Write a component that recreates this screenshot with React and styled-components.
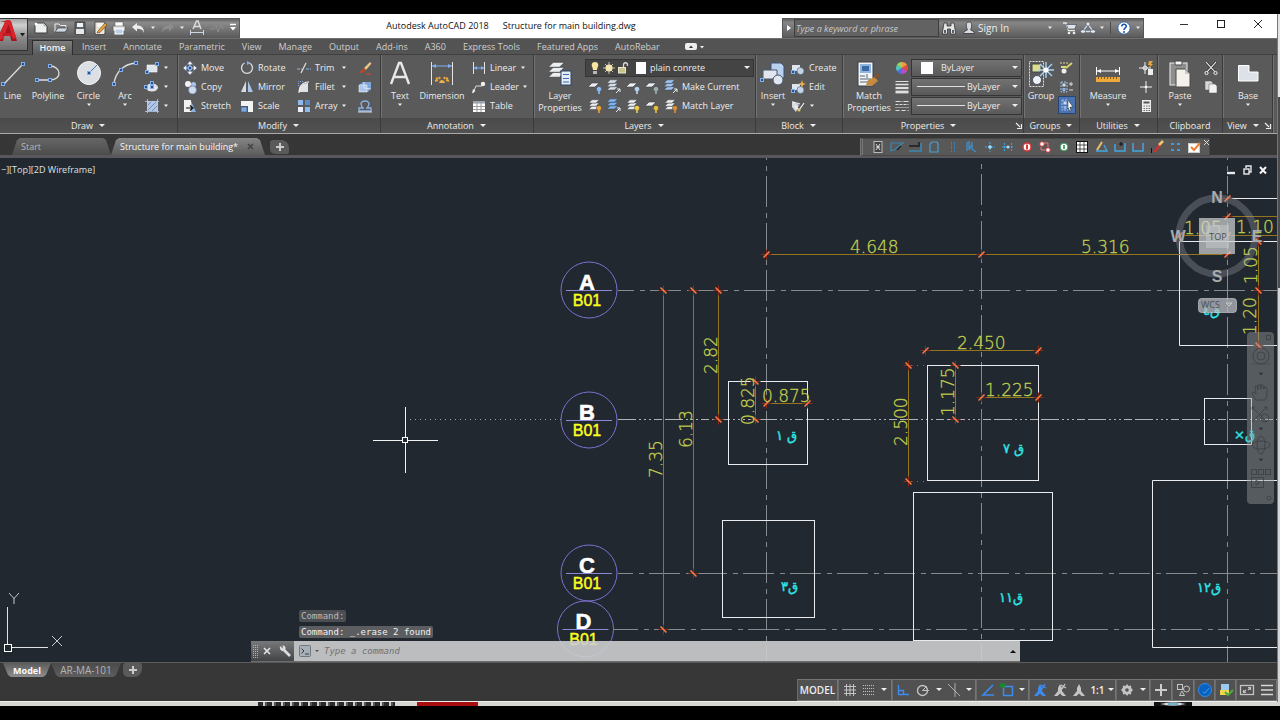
import React from "react";
import styled, { createGlobalStyle, css } from "styled-components";

const Global = createGlobalStyle`
  *, *::before, *::after { box-sizing: border-box; }
  html, body { margin: 0; background: #000; }
  body { font-family: "Open Sans", "Noto Sans", sans-serif; font-size: 9px; color: #ececec; }
  button, input, select { font: inherit; color: inherit; border: 0; margin: 0; padding: 0; background: none; }
  button { cursor: pointer; white-space: nowrap; }
  svg { display: block; flex: none; }
`;

/* ---------- shell ---------- */
const Page = styled.div`
  min-height: 100vh;
  padding: 14px 0;
  display: flex;
  flex-direction: column;
  background: #000;
  overflow: hidden;
`;
const Screen = styled.div`
  flex: 1;
  display: flex;
  min-width: 0;
`;
const Gutter = styled.div`
  flex: none;
  width: 3px;
  border-left: 1px solid #77787a;
  background: linear-gradient(#e4e4e4 83px, #4b4b4d 83px, #4b4b4d 274px, #d6d6d8 274px);
`;
const Window = styled.div`
  flex: 1;
  min-width: 0;
  display: flex;
  flex-direction: column;
  border-bottom: 1px solid #f0f0f0;
`;
const Taskbar = styled.div`
  height: 4px;
  display: flex;
  background: #d8d6d2;
  overflow: hidden;
`;
const TaskSlot = styled.div`
  width: ${(p) => p.$w}px;
  background: ${(p) => p.$bg || "transparent"};
`;

/* ---------- title bar ---------- */
const Header = styled.header`
  position: relative;
`;
const TitleBar = styled.div`
  height: 24px;
  display: flex;
  align-items: flex-end;
  background: #fff;
`;
const AppButton = styled.button`
  position: absolute;
  left: 0;
  top: 4px;
  width: 28px;
  height: 33px;
  background: linear-gradient(#a4a4a4, #cfcfcf 20%, #8b8b8b 60%, #6e6e6e);
  border: 1px solid #333;
  border-left: 0;
`;
const QuickAccess = styled.div`
  height: 20px;
  margin-left: 27px;
  padding-left: 4px;
  display: flex;
  background: linear-gradient(#606060, #8a8a8a 20%, #5c5c5c);
  border: 1px solid #5a5a5a;
  border-left: 0;
`;
const Cell = styled.button`
  width: ${(p) => p.$w || 20}px;
  flex: none;
  display: flex;
  align-items: center;
  justify-content: center;
`;
const Title = styled.div`
  flex: 1;
  height: 22px;
  align-self: flex-start;
  display: flex;
  align-items: center;
  justify-content: center;
  gap: 14px;
  color: #111;
`;
const InfoCenter = styled.div`
  height: 20px;
  display: flex;
  align-items: stretch;
  background: linear-gradient(#606060, #868686 20%, #5c5c5c);
  border: 1px solid #555;
`;
const Search = styled.input`
  width: 145px;
  padding: 0 1px;
  background: #626262;
  border: 1px solid #3e3e3e;
  font-style: italic;
  &::placeholder { color: #c8c8c8; opacity: 1; }
`;
const SignIn = styled.button`
  width: 83px;
  display: flex;
  align-items: center;
  justify-content: space-between;
  padding-right: 8px;
  font-size: 10px;
`;
const Divider = styled.span`
  width: 1px;
  margin: 3px 4px;
  background: #4a4a4a;
`;
const WindowButtons = styled.div`
  width: 133px;
  height: 20px;
  align-self: flex-start;
  padding-right: 1px;
  display: flex;
  justify-content: flex-end;
`;

/* ---------- ribbon ---------- */
const Tabs = styled.nav`
  height: 17px;
  padding-left: 32px;
  display: flex;
  background: #535353;
  border-top: 1px solid #707070;
  border-bottom: 1px solid #3f3f3f;
`;
const Tab = styled.button`
  padding: 0 8px 0 9px;
  line-height: 15px;
  color: ${(p) => (p.$on ? "#f4f4f4" : "#cfcfcf")};
  font-weight: ${(p) => (p.$on ? 600 : 400)};
  ${(p) =>
    p.$on &&
    css`
      width: 41px;
      padding: 0;
      margin: 1px 0 -1px 0;
      line-height: 14px;
      background: linear-gradient(#7e7e7e, #5a5a5a);
      border: 1px solid #2e2e2e;
      border-bottom: 0;
    `}
`;
const Ribbon = styled.div`
  height: 79px;
  display: flex;
  background: #5a5a5a;
  border-bottom: 1px solid #a9a9a9;
`;
const PanelBox = styled.section`
  width: ${(p) => p.$w}px;
  flex: none;
  display: flex;
  flex-direction: column;
  border-right: 1px solid #3b3b3b;
  box-shadow: 1px 0 #727272;
`;
const PanelBody = styled.div`
  flex: 1;
  padding: 3px 0 0 ${(p) => p.$pad || 0}px;
  display: flex;
`;
const PanelTitle = styled.button`
  height: 15px;
  display: flex;
  align-items: center;
  justify-content: center;
  background: linear-gradient(#4a4a4a, #525252);
`;
const TitleLabel = styled.span`
  display: flex;
  flex: 1;
  align-items: center;
  justify-content: center;
  gap: 5px;
`;
const Big = styled.button`
  width: ${(p) => p.$w}px;
  flex: none;
  display: flex;
  flex-direction: column;
  align-items: center;
  line-height: 12px;
`;
const BigArt = styled.span`
  height: 32px;
  display: flex;
  align-items: center;
`;
const BigCaret = styled.span`
  height: 6px;
  display: flex;
  align-items: center;
`;
const Col = styled.div`
  width: ${(p) => p.$w}px;
  flex: none;
  margin-left: ${(p) => p.$ml || 0}px;
`;
const Row = styled.div`
  height: 19px;
  display: flex;
  align-items: center;
`;
const LayerRow = styled(Row)`
  padding-left: 2px;
  gap: 3px;
`;
const Small = styled.button`
  height: 19px;
  width: ${(p) => (p.$fill ? "100%" : "auto")};
  display: flex;
  align-items: center;
  gap: 3px;
  ${(p) =>
    p.$on &&
    css`
      height: 18px;
      padding: 0 1px;
      background: #4a73b4;
      outline: 1px solid #27436f;
      outline-offset: -1px;
    `}
`;
const IconSlot = styled.span`
  width: 16px;
  height: 16px;
  flex: none;
  display: flex;
  align-items: center;
  justify-content: center;
`;
const SmallCaret = styled.span`
  margin-left: auto;
  padding-right: 3px;
`;
const Combo = styled.label`
  width: ${(p) => p.$w || 111}px;
  height: 18px;
  padding: 0 2px 0 3px;
  display: flex;
  align-items: center;
  background: ${(p) => (p.$dark ? "#444" : "linear-gradient(#727272, #595959)")};
  border: 1px solid #353535;
  select {
    appearance: none;
    flex: 1;
    min-width: 0;
    padding-left: ${(p) => p.$pad || 4}px;
    outline: none;
  }
`;
const LineSample = styled.span`
  width: 48px;
  flex: none;
  height: 1px;
  margin-left: 2px;
  background: #e0e0e0;
`;
const Swatch = styled.span`
  width: ${(p) => p.$s || 12}px;
  height: 12px;
  flex: none;
  background: #fff;
  margin-left: ${(p) => p.$ml || 0}px;
`;

/* ---------- file tabs ---------- */
const FileBar = styled.div`
  height: 24px;
  padding: 4px 0 0 12px;
  display: flex;
  align-items: flex-start;
  background: #363636;
  border-bottom: 3px solid #58585c;
`;
const FileTab = styled.button`
  width: ${(p) => p.$w}px;
  height: 17px;
  padding: 0 9px;
  display: flex;
  align-items: center;
  justify-content: space-between;
  color: ${(p) => (p.$on ? "#f8f8f8" : "#b8b8b8")};
  background: ${(p) => (p.$on ? "linear-gradient(#858585, #5c5c5c)" : "linear-gradient(#666, #4c4c4c)")};
  clip-path: polygon(0 100%, 5px 2px, 8px 0, calc(100% - 8px) 0, calc(100% - 5px) 2px, 100% 100%);
`;
const AddTab = styled.button`
  width: 19px;
  height: ${(p) => p.$h || 14}px;
  margin: ${(p) => p.$m || "2px 0 0 5px"};
  display: flex;
  align-items: center;
  justify-content: center;
  background: #5a5a5a;
  border-radius: ${(p) => p.$r || "3px 8px 2px 5px"};
`;
const Dock = styled.div`
  width: 350px;
  height: 18px;
  margin: 0 67px 0 auto;
  padding: 0 6px;
  display: flex;
  position: relative;
  background: #585858;
  border: 1px solid #484848;
  border-left: 3px double #777;
`;
const DockButton = styled.button`
  flex: 1;
  display: flex;
  align-items: center;
  justify-content: center;
`;
const DockClose = styled.button`
  position: absolute;
  right: 0;
  top: 1px;
`;

/* ---------- drawing area ---------- */
const Canvas = styled.main`
  position: relative;
  flex: 1;
  min-height: 504px;
  overflow: hidden;
  background: #212830;
`;
const Sheet = styled.svg`
  position: absolute;
  inset: 0;
  width: 100%;
  height: 100%;
  font-family: "DejaVu Sans", sans-serif;
`;
const ViewLabel = styled.div`
  position: absolute;
  left: 1px;
  top: 5px;
  line-height: 14px;
  color: #dfe1e3;
`;
const MdiButtons = styled.div`
  position: absolute;
  right: 6px;
  top: 6px;
  display: flex;
`;
const CubeWrap = styled.div`
  position: absolute;
  right: 8px;
  top: 28px;
`;
const NavBar = styled.div`
  position: absolute;
  right: 3px;
  top: 174px;
  width: 27px;
  height: 172px;
  background: rgba(150, 152, 156, 0.45);
  border-radius: 4px;
`;
const History = styled.div`
  position: absolute;
  left: 299px;
  bottom: 24px;
  display: flex;
  flex-direction: column;
  align-items: flex-start;
  gap: 4px;
  font: 9px/12px "DejaVu Sans Mono", monospace;
`;
const Echo = styled.span`
  padding: 0 2px;
  background: ${(p) => (p.$dim ? "#4b4f54" : "#5b5d61")};
  color: ${(p) => (p.$dim ? "#b9bbbd" : "#f2f2f2")};
  border-radius: 2px;
`;
const CommandLine = styled.div`
  position: absolute;
  left: 251px;
  right: 257px;
  bottom: 0;
  height: 21px;
  display: flex;
  border-bottom: 1px solid #6b6b6b;
`;
const CommandTools = styled.div`
  width: 43px;
  display: flex;
  background: linear-gradient(#77797b, #424446);
`;
const CommandInput = styled.label`
  flex: 1;
  display: flex;
  align-items: center;
  gap: 3px;
  padding: 0 3px 0 5px;
  background: rgba(205, 205, 207, 0.9);
  input {
    flex: 1;
    padding-left: 1px;
    font: italic 9px "DejaVu Sans Mono", monospace;
    outline: none;
  }
  input::placeholder { color: #707274; opacity: 1; }
`;

/* ---------- bottom ---------- */
const Bottom = styled.footer`
  height: 39px;
  display: flex;
  justify-content: space-between;
  align-items: flex-start;
  background: #373737;
  border-top: 1px solid #5c5c5c;
`;
const LayoutTabs = styled.div`
  padding-left: 3px;
  display: flex;
`;
const LayoutTab = styled.button`
  width: ${(p) => p.$w}px;
  height: 14px;
  background: ${(p) => (p.$on ? "linear-gradient(#5c5c5c, #8d8d8d)" : "linear-gradient(#4a4a4a, #5e5e5e)")};
  color: ${(p) => (p.$on ? "#fff" : "#b5b5b5")};
  font-weight: ${(p) => (p.$on ? 700 : 400)};
  font-size: ${(p) => (p.$on ? 9 : 10)}px;
  line-height: 13px;
  clip-path: polygon(0 0, 100% 0, calc(100% - 5px) calc(100% - 2px), calc(100% - 8px) 100%, 8px 100%, 5px calc(100% - 2px));
`;
const Status = styled.div`
  height: 22px;
  align-self: flex-end;
  display: flex;
`;
const StatusGroup = styled.div`
  width: ${(p) => p.$w}px;
  display: flex;
  align-items: center;
  justify-content: center;
  background: #515151;
  border: 1px solid #757575;
  border-left-color: #6a6a6a;
`;
const StatusText = styled(Cell)`
  width: auto;
  padding: 0 2px;
  font-size: 10px;
  font-weight: 600;
  color: #eee;
`;

/* ---------- drawings used as icons ---------- */
const Ic = ({ w = 16, h = 16, children }) => (
  <svg width={w} height={h} viewBox={`0 0 ${w} ${h}`} fill="none" stroke="none" aria-hidden="true">
    {children}
  </svg>
);
const Caret = ({ s = 4, c = "#eee" }) => (
  <Ic w={s * 2} h={s}>
    <path d={`M1 0H${s * 2 - 1}L${s} ${s - 1}Z`} fill={c} />
  </Ic>
);
const Tiny = () => (
  <Ic w={6} h={4}>
    <path d="M1 0.5H5L3 3Z" fill="#f0f0f0" />
  </Ic>
);
const B = "#7fb0f0";
const Node = ({ x, y }) => <rect x={x - 1.5} y={y - 1.5} width="3" height="3" fill="#2e4f86" stroke={B} />;

const NewI = () => (<Ic><path d="M2 3H11L14 6V13H2Z" fill="#eef0f0" stroke="#3c3c3c" /><path d="M10.500 3V6.500H14" fill="#b8b8b8" /><circle cx="3" cy="4" r="1.500" fill="#fff" /></Ic>);
const OpenI = () => (<Ic><path d="M2 12V4H6L7.500 5.500H13V8" fill="#7e7e7e" stroke="#f0f0f0" /><path d="M2 12L5 8H15L12 12Z" fill="#cfd8e4" stroke="#333" strokeWidth=".6" /></Ic>);
const SaveI = ({ pen }) => (<Ic><path d="M3 2H13V14H3Z" fill={pen ? "#e4e0d2" : "#5b6670"} stroke="#333" strokeWidth=".7" /><rect x="5" y="3" width="6" height="4" fill="#f4f4f4" /><rect x="4" y="9" width="8" height="5" fill="#e8e8e8" />{pen && <path d="M6 11L13 3L15 5L8 12.500L5 13Z" fill="#e8a43a" stroke="#5d3b10" strokeWidth=".6" />}</Ic>);
const PrintI = () => (<Ic><rect x="4" y="2" width="8" height="5" fill="#fff" stroke="#555" strokeWidth=".5" /><rect x="2" y="6" width="12" height="5" rx="1" fill="#e3e3e3" stroke="#444" strokeWidth=".5" /><rect x="4" y="9" width="8" height="5" fill="#b8cfe8" stroke="#fff" /></Ic>);
const Arrow = ({ flip, c }) => (<Ic><g transform={flip ? "translate(16 0) scale(-1 1)" : undefined}><path d="M2 7L7 3V5.500C12 5.500 14 8 14 13C12.500 9.500 11 8.800 7 8.800V11.500Z" fill={c} /></g></Ic>);
const DimA = () => (<Ic w={18} h={16}><path d="M5 9L8.500 1H10L13 9M6.500 6.500H11.500" stroke="#ddd" strokeWidth="1.400" /><path d="M2.500 10V15M15.500 10V15M2.500 12.500H15.500" stroke="#c9d6e8" /></Ic>);
const PulseI = () => (<Ic><path d="M1 9H5L7 5L9 12L12 4L13 8H15" stroke="#8b8b8b" /></Ic>);
const MoreI = () => (<Ic w={10} h={10}><path d="M2 1.500H8" stroke="#fff" strokeWidth="1.500" /><path d="M2 4H8L5 7.500Z" fill="#fff" /></Ic>);
const LogoA = () => (<Ic w={27} h={31}><path d="M0 2H11L17 22H11.500L9.800 16H4.500L3 22H0V14L5 3Z" fill="#a5141a" /><path d="M0 14L6 1H10L16.500 19L13 20L8.500 5.500L3 20L0 21Z" fill="#d8262c" /><path d="M3 14H11L12 17H2Z" fill="#c41d24" /><path d="M20 14H25L22.500 17.500Z" fill="#1c1c1c" /></Ic>);
const Binoc = () => (<Ic><path d="M3 3H6V6H10V3H13L14.500 12V14H9.500V9H6.500V14H1.500V12Z" fill="#e6e6e6" stroke="#333" strokeWidth=".8" /><rect x="3" y="10" width="2" height="3" fill="#4f5f74" /><rect x="11" y="10" width="2" height="3" fill="#4f5f74" /></Ic>);
const UserI = () => (<Ic><path d="M8 2C10.500 2 11 4 10.600 6.500C10.300 8.500 9.600 9 9.600 10C11 11 13.500 11 13.500 13.500H2.500C2.500 11 5 11 6.400 10C6.400 9 5.700 8.500 5.400 6.500C5 4 5.500 2 8 2Z" fill="#d8dadd" stroke="#30353c" strokeWidth=".8" /></Ic>);
const CartI = () => (<Ic><path d="M1 3H4L6.500 10.500H13" stroke="#e8e8e8" strokeWidth="1.300" /><path d="M4.500 4.500H14.500L12.800 9H6Z" fill="#dfe3ea" stroke="#39424f" strokeWidth=".6" /><circle cx="7" cy="13" r="1.300" fill="#eee" /><circle cx="12" cy="13" r="1.300" fill="#eee" /></Ic>);
const TriI = () => (<Ic><path d="M8 4L3 11.500H13Z" stroke="#cfdcf0" strokeWidth="1.300" /><circle cx="8" cy="4" r="2" fill="#e6ecf6" stroke="#456" strokeWidth=".6" /><ellipse cx="3" cy="11.500" rx="2.500" ry="1.800" fill="#e6ecf6" stroke="#456" strokeWidth=".6" /><ellipse cx="13" cy="11.500" rx="2.500" ry="1.800" fill="#e6ecf6" stroke="#456" strokeWidth=".6" /></Ic>);
const HelpI = () => (<Ic><circle cx="8" cy="8" r="6.200" fill="#fff" stroke="#2e5fa3" strokeWidth="1" /><path d="M5.800 6.500C5.800 3.500 10.400 3.600 10.300 6.300C10.200 8 8 8 8 10" stroke="#1d57a8" strokeWidth="1.600" /><circle cx="8" cy="12" r="1" fill="#1d57a8" /></Ic>);

/* draw panel */
const LineI = () => (<Ic w={26} h={28}><path d="M3 25L23 4" stroke="#ddd" strokeWidth="1.300" /><Node x={3} y={24} /><Node x={23} y={4} /></Ic>);
const PolyI = () => (<Ic w={28} h={28}><path d="M3 20H16C29 20 27 6 16 6" stroke="#ddd" strokeWidth="1.300" /><Node x={3} y={20} /><Node x={16} y={20} /><Node x={16} y={6} /></Ic>);
const CircleI = () => (<Ic w={28} h={28}><circle cx="14" cy="13" r="11.500" fill="#dcdfe4" stroke="#f4f4f4" /><path d="M14 13L22 5" stroke="#4d78b8" /><Node x={14} y={13} /></Ic>);
const ArcI = () => (<Ic w={28} h={28}><path d="M3 24C4 13 12 4 25 3" stroke="#ddd" strokeWidth="1.300" /><Node x={3} y={24} /><Node x={10} y={10} /><Node x={25} y={3} /></Ic>);
const RectI = () => (<Ic><path d="M3 5H13V12H3Z" fill="#dfe3ea" stroke="#fff" strokeWidth=".6" /><Node x={3} y={12} /><Node x={13} y={4} /></Ic>);
const EllI = () => (<Ic><ellipse cx="8" cy="8.500" rx="6" ry="4" fill="#e0e4ea" /><Node x={2} y={8} /><Node x={8} y={8} /><Node x={8} y={4} /></Ic>);
const HatchI = () => (<Ic><rect x="3" y="3" width="11" height="10" fill="#b4c6e2" /><path d="M3 8L8 3M3 13L13 3M8 13L14 7" stroke="#6a8fc6" /><path d="M3.500 1V15M13.500 1V15M1 3.500H15M1 13.500H15" stroke="#b8cce8" strokeWidth=".8" /></Ic>);
/* modify panel */
const MoveI = () => (<Ic><path d="M8 1L11 4.500H5ZM8 15L11 11.500H5ZM1 8L4.500 5V11ZM15 8L11.500 5V11Z" fill="#f0f3f8" stroke="#43618e" strokeWidth=".4" /><path d="M8 4V12M4 8H12" stroke="#b9cdea" strokeWidth="1.200" /><Node x={8} y={8} /></Ic>);
const CopyI = () => (<Ic><circle cx="6" cy="5" r="3" fill="#f2f2f2" /><circle cx="11.500" cy="5.500" r="2.500" fill="#a9c3e8" /><circle cx="10.500" cy="11" r="4" fill="#cfdcee" stroke="#56719a" strokeWidth=".6" /></Ic>);
const StretchI = () => (<Ic><path d="M2 2H9V14H2Z" fill="#f1f3f5" /><path d="M9 3L14 14H9Z" fill="#86b2e4" /><path d="M4 10H10M8 7.500L11 10L8 12.500" stroke="#111" strokeWidth="1.200" /></Ic>);
const RotateI = () => (<Ic><path d="M10.500 3A5.500 5.500 0 1 1 5.500 3" stroke="#d5d9de" strokeWidth="1.400" /><path d="M8 1L11.500 3L8 5Z" fill={B} /></Ic>);
const MirrorI = () => (<Ic><path d="M7 2V13H2Z" fill="#d8dce2" /><path d="M9 2V13H14Z" fill="#a9c3e6" /></Ic>);
const ScaleI = () => (<Ic><path d="M2 3H14V14H9V8H2Z" fill="#f1f3f5" /><path d="M2 9H8V14H2Z" fill="#7fa7dc" stroke="#2d4f7f" strokeWidth=".6" /></Ic>);
const TrimI = () => (<Ic><path d="M1 9H6M10 9H15" stroke="#8ab4ee" strokeDasharray="3 1" /><path d="M5 13L10 3" stroke="#e0e0e0" strokeWidth="1.200" /></Ic>);
const FilletI = () => (<Ic><path d="M3 13C3 7 6 4 12 4V13Z" fill="#dfe3e8" /><path d="M3 14C3 7 6 3 13 3" stroke="#fff" /><path d="M2.500 7V2.500H7" stroke={B} strokeDasharray="1 1" /></Ic>);
const ArrayI = () => (<Ic><rect x="2" y="2" width="5" height="5" fill="#8fb8ee" /><rect x="9" y="2" width="5" height="5" fill="#5f89c4" /><rect x="2" y="9" width="5" height="5" fill="#eef" /><rect x="9" y="9" width="5" height="5" fill="#8fb8ee" /></Ic>);
const BrushI = () => (<Ic><path d="M7 8L13 2L14.500 3.500L9 10Z" fill="#e8c48a" /><path d="M7 8L9 10L5 13H2Z" fill="#c04726" /><path d="M9 14H14" stroke="#d64a30" /></Ic>);
const ExplodeI = () => (<Ic><path d="M2 6L6 3H14V9L11 13H2Z" fill="#7da5dc" /><path d="M2 6H10V13H2Z" fill="#a9c6ec" stroke="#fff" strokeWidth=".5" /><path d="M7 3V9L14 10" stroke="#d9e6f6" /></Ic>);
const OffsetI = () => (<Ic><path d="M2 13V10H6C2 5 5 3 8 3C11 3 14 5 10 10H14V13Z" stroke="#8fb4e6" strokeWidth="1.300" /><path d="M1 14H15" stroke="#cfdcee" /></Ic>);
/* annotation */
const BigA = () => (<Ic w={24} h={28}><path d="M3 24L11 3H13L21 24M6 17H18" stroke="#e6e8ea" strokeWidth="2.400" /></Ic>);
const DimI = () => (<Ic w={26} h={28}><path d="M2.500 2V25M23.500 2V25" stroke="#e4e4e4" /><path d="M3 6H23" stroke={B} /><path d="M3 6L7 4V8ZM23 6L19 4V8Z" fill={B} /><path d="M6 21L9 20M10 17L11 19M16 17L15 19M20 21L17 20M7 18L9 19M19 18L17 19" stroke="#e8a43a" strokeWidth="2" /><path d="M10 23C11 19 15 19 16 23Z" fill="#efb04a" /></Ic>);
const LinearI = () => (<Ic><path d="M2.500 2V14M13.500 2V14" stroke="#e4e4e4" /><path d="M3 8H13" stroke={B} /><path d="M3 8L6 6V10ZM13 8L10 6V10Z" fill={B} /></Ic>);
const LeaderI = () => (<Ic><path d="M2 14L5 7H11" stroke="#ddd" /><path d="M1 14.500L2 10L4.500 12Z" fill="#eee" /><circle cx="12" cy="5" r="2.200" fill="#f0f0f0" /></Ic>);
const TableI = () => (<Ic><rect x="2" y="3" width="12" height="11" fill="#fbfbfb" /><rect x="2" y="3" width="12" height="2.500" fill="#9aa2ad" /><path d="M6 5V14M10 5V14M2 8.500H14M2 11.500H14" stroke="#8a8a8a" strokeWidth=".8" /></Ic>);
/* layers */
const Sheets = ({ x = 0, y = 0, k = 1, c = "#eceef0" }) => (
  <g transform={`translate(${x} ${y}) scale(${k})`}>
    {[8, 4, 0].map((t) => (<path key={t} d={`M1 ${t + 5}L5 ${t + 1}H14L10 ${t + 5}Z`} fill={c} stroke="#3a3f47" strokeWidth=".6" />))}
  </g>
);
const LayersBig = () => (<Ic w={26} h={28}><Sheets k={1.250} y={1} /><rect x="14" y="11" width="10" height="14" fill="#e4ecf6" stroke="#2d4364" /><path d="M16 14.500H22M16 18.500H22M16 22H22" stroke="#3f6bb0" /></Ic>);
const LayerI = ({ c, one, tint }) => (<Ic>{one ? <path d="M1 8L5 4H12L8 8Z" fill="#eceef0" stroke="#3a3f47" strokeWidth=".6" /> : <Sheets k={0.800} x={1} y={1} c={tint || "#eceef0"} />}<circle cx="12" cy="10" r="2.600" fill={c} stroke="#333" strokeWidth=".4" /><path d="M12 12V15" stroke={c} strokeWidth="1.600" /></Ic>);
const LayerMove = ({ c = B }) => (<Ic><Sheets k={0.850} c={c} /><path d="M10 14L14 10M14 13V10H11" stroke="#e8eef8" /></Ic>);
const Bulb = () => (<Ic w={12} h={16}><path d="M6 2C9.500 2 10 5.500 8.500 7.500L8 10H4L3.500 7.500C2 5.500 2.500 2 6 2Z" fill="#f7e5a0" /><rect x="4" y="11" width="4" height="3" fill="#b9b9b9" /></Ic>);
const Sun = () => (<Ic><path d="M8 2V14M2 8H14M4 4L12 12M12 4L4 12" stroke="#c9bf94" /><circle cx="8" cy="8" r="3.500" fill="#f3e7b6" /></Ic>);
const Lock = () => (<Ic w={12} h={16}><path d="M6.500 8V5C6.500 2 10.500 2 10.500 5V6" stroke="#d8d8d8" strokeWidth="1.300" /><rect x="1.500" y="7.500" width="7" height="5.500" fill="#c9c28a" stroke="#e9e6cf" /></Ic>);
/* block */
const InsertI = () => (<Ic w={28} h={28}><path d="M12 3H22L25 6V18H12Z" fill="#b9d0ee" stroke="#3c5577" /><path d="M4 10H18V19H4Z" fill="#e1e6ee" stroke="#48576b" /><circle cx="19" cy="20" r="5" fill="#dfe6ef" stroke="#47566a" /><Node x={3} y={20} /></Ic>);
const CreateI = ({ star }) => (<Ic><path d="M2 5H10V11H2Z" fill="#dfe5ee" /><circle cx="10.500" cy="11" r="3.500" fill="#c3d3e8" stroke="#4a596d" strokeWidth=".6" /><Node x={3} y={12} />{star && <path d="M12 1L13 4L16 5L13 6L12 9L11 6L8 5L11 4Z" fill="#efb04a" />}</Ic>);
const AttrI = () => (<Ic><path d="M2 3L9 7L6 14L2 9Z" fill="#d9dde2" /><path d="M3 4L10 6M5 8L9 12L14 5" stroke="#f2f2f2" strokeWidth="1.200" /><circle cx="9" cy="12" r="1.500" fill="#e8c46a" /></Ic>);
/* properties */
const MatchI = () => (<Ic w={28} h={28}><rect x="3" y="2" width="15" height="24" fill="#f2f4f6" stroke="#3a4049" /><rect x="5" y="4" width="11" height="9" fill="#8eb4e0" /><rect x="7" y="6" width="7" height="5" fill="#3a6aa8" /><path d="M5 16H10M5 19H16M5 22H14M12 14V18" stroke="#53657c" /><path d="M13 20L20 17L23 21L17 26L11 25Z" fill="#c78a3e" /><path d="M20 18L25 14" stroke="#8a4f24" strokeWidth="2.500" /></Ic>);
const WheelI = () => (<Ic><path d="M8 8V2A6 6 0 0 1 13.200 5Z" fill="#ef9a3e" /><path d="M8 8L13.200 5A6 6 0 0 1 13.200 11Z" fill="#e84d3c" /><path d="M8 8L13.200 11A6 6 0 0 1 8 14Z" fill="#b84fc0" /><path d="M8 8V14A6 6 0 0 1 2.800 11Z" fill="#4d6fe0" /><path d="M8 8L2.800 11A6 6 0 0 1 2.800 5Z" fill="#4ec9c0" /><path d="M8 8L2.800 5A6 6 0 0 1 8 2Z" fill="#9bd456" /></Ic>);
const WeightI = () => (<Ic><path d="M1.500 2.500H14.500" stroke="#e0e0e0" /><path d="M1.500 5.500H14.500" stroke="#e0e0e0" strokeWidth="1.600" /><path d="M1.500 9H14.500" stroke="#e0e0e0" strokeWidth="2.200" /><path d="M1.500 13H14.500" stroke="#e0e0e0" strokeWidth="2.800" /></Ic>);
const LtypeI = () => (<Ic><path d="M1.500 3.500H14.500" stroke="#ddd" strokeDasharray="5 1 1 1" /><path d="M1.500 6.500H14.500" stroke="#ddd" strokeDasharray="3 1" /><path d="M1.500 9.500H14.500" stroke="#ddd" strokeDasharray="1 1" /><path d="M1.500 12.500H14.500" stroke="#ddd" strokeDasharray="4 2" /></Ic>);
/* groups, utilities, clipboard, view */
const GroupBig = () => (<Ic w={28} h={28}><rect x="2.500" y="1.500" width="14" height="25" stroke="#ddd" strokeDasharray="2 1" /><rect x="5" y="4" width="9" height="8" fill="#dede8e" stroke="#3e4650" /><circle cx="10" cy="20" r="4.500" fill="#eef2f7" stroke="#40536d" /><path d="M19 2V18M11 10H27M13 4L25 16M25 4L13 16" stroke="#a9d3fa" strokeWidth="1.400" /><circle cx="19" cy="10" r="2.600" fill="#fff" /></Ic>);
const GroupEdit = () => (<Ic><path d="M2 3H10" stroke="#d8d890" strokeDasharray="2 1" /><circle cx="6" cy="11" r="2.500" fill="#eee" /><path d="M3 6H8V8H3Z" fill="#d9d97a" /><path d="M8 8L14 3" stroke="#d9cf6a" strokeWidth="2" /></Ic>);
const GroupList = ({ cur }) => (<Ic><rect x="3" y="3" width="6" height="10" stroke="#9fc0ea" strokeDasharray="2 1" /><rect x="4.500" y="4.500" width="3" height="3" fill="#cfe0f5" /><rect x="4.500" y="9" width="3" height="3" fill="#8fb4e6" />{cur ? <path d="M9 3L14 10H11L12 14L10.500 14L9.500 11L9 12Z" fill="#fff" stroke="#222" strokeWidth=".5" /> : <path d="M11 5H15M13 3V7M11 11H15" stroke="#ddd" />}</Ic>);
const MeasureI = () => (<Ic w={28} h={28}><path d="M2.500 7V15M25.500 7V15M3 11H25" stroke="#fff" /><path d="M3 11L7 9V13ZM25 11L21 9V13Z" fill="#fff" /><rect x="2" y="17" width="24" height="5" fill="#eda93a" /><path d="M4.500 17V19M7.500 17V19M10.500 17V19M13.500 17V19M16.500 17V19M19.500 17V19M22.500 17V19" stroke="#6d4610" strokeWidth=".8" /></Ic>);
const QSelI = () => (<Ic><path d="M7 2V14M1 8H13" stroke="#f0f0f0" /><circle cx="7" cy="8" r="2" stroke="#f0f0f0" /><path d="M11 1L15 1L13 4H15L11 8L12 5H10Z" fill="#e8a43a" /><rect x="10" y="9" width="5" height="6" fill="#eee" /></Ic>);
const IdI = () => (<Ic><path d="M8 2V14M2 8H14" stroke="#f0f0f0" /><path d="M6.500 8L8 6.500L9.500 8L8 9.500Z" fill="#fff" /></Ic>);
const CalcI = () => (<Ic><rect x="4" y="2" width="9" height="12" fill="#ededed" /><rect x="5.500" y="3.500" width="6" height="2" fill="#555" /><path d="M5.500 8H12M5.500 10.500H12M5.500 12.500H12" stroke="#666" strokeDasharray="1.500 1" /></Ic>);
const PasteI = () => (<Ic w={28} h={28}><rect x="4" y="3" width="17" height="22" fill="#8e8e8e" stroke="#eee" /><rect x="9" y="1" width="7" height="4" rx="1" fill="#f5f5f5" stroke="#444" /><path d="M10 9H19L24 14V27H10Z" fill="#f4f1ea" stroke="#4a4a4a" /><path d="M19 9V14H24Z" fill="#c8c8c8" /></Ic>);
const CutI = () => (<Ic><path d="M3 2L12 12M13 2L4 12" stroke="#111" strokeWidth="2.400" /><path d="M3 2L12 12M13 2L4 12" stroke="#ddd" strokeWidth="1.200" /><circle cx="3.500" cy="13" r="1.600" stroke="#eee" /><circle cx="12.500" cy="13" r="1.600" stroke="#eee" /></Ic>);
const ClipI = () => (<Ic><path d="M2 2H8L10 4V11H2Z" fill="#d8d8d8" stroke="#555" strokeWidth=".5" /><path d="M6 5H12L14 7V14H6Z" fill="#f3f3f3" stroke="#555" strokeWidth=".5" /></Ic>);
const BaseI = () => (<Ic w={28} h={28}><path d="M4.500 5.500H15V12H24V21H4.500Z" fill="#dde1e8" stroke="#fff" /></Ic>);
const Launch = () => (<Ic w={8} h={8}><path d="M1 1L5 5M6.500 2V6.500H2" stroke="#eee" strokeWidth="1.200" /></Ic>);
const Plus = ({ s = 8, c = "#ccc" }) => (<Ic w={s} h={s}><path d={`M${s / 2} 0V${s}M0 ${s / 2}H${s}`} stroke={c} strokeWidth="2" /></Ic>);

const dock = [
  ["Block table", <Ic><rect x="4" y="2.500" width="8" height="11" fill="#444" stroke="#bbb" /><path d="M6 5L10 11M10 5L6 11M6 8H10" stroke="#ddd" /></Ic>],
  ["Measure slope", <Ic><path d="M2 12V4H14L5 11Z" stroke="#3b86b4" strokeWidth="1.200" /><path d="M8 11L12 7" stroke="#222" strokeWidth="1.500" /></Ic>],
  ["Extend edge", <Ic><path d="M2 7H12V3" stroke="#1d1d1d" strokeWidth="1.500" /><path d="M2 12H14V4" stroke="#3b86b4" strokeWidth="1.500" /></Ic>],
  ["Section", <Ic><path d="M4 13V5L6 3H11L12 5V13Z" stroke="#4aa0d4" strokeWidth="1.200" /></Ic>],
  ["Split", <Ic><path d="M6.500 3V13M9.500 3V13" stroke="#3a7dae" strokeDasharray="3 1" /></Ic>],
  ["Hook", <Ic><path d="M4 12V4L6 3V11L9 5V3M9 3V10L13 13" stroke="#3f8fca" strokeWidth="1.300" /></Ic>],
  ["Centre point", <Ic><path d="M8 3V13M3 8H13" stroke="#42a5e0" strokeDasharray="2 1" /><circle cx="8" cy="8" r="1.800" fill="#a8ddf8" /></Ic>],
  ["Distribute", <Ic><path d="M4.500 4V12M11.500 4V12M2 8H14" stroke="#42a5e0" strokeDasharray="2 1" /><circle cx="8" cy="8" r="1.500" fill="#a8ddf8" /></Ic>],
  ["Mark red", <Ic><circle cx="8" cy="8" r="4" fill="#fff" stroke="#d33" strokeWidth="1.400" /><path d="M8 5.500V10.500" stroke="#d22" strokeWidth="1.800" /></Ic>],
  ["Link marks", <Ic><circle cx="5" cy="5" r="2.300" fill="#fff" stroke="#d33" /><circle cx="11" cy="11" r="2.300" fill="#fff" stroke="#d33" /><path d="M7 4H11V8M4 8V11H8" stroke="#e77" /></Ic>],
  ["Mark green", <Ic><circle cx="8" cy="8" r="3.800" fill="#fff" stroke="#3b9f62" /><path d="M8 6V10" stroke="#2b8f52" strokeWidth="1.600" /></Ic>],
  ["Schedule", <Ic><rect x="2.500" y="2.500" width="11" height="11" fill="#fff" stroke="#111" /><path d="M6 3V13M10 3V13M3 6H13M3 10H13" stroke="#111" strokeWidth=".7" /></Ic>],
  ["Edit bar", <Ic><path d="M3 12H14L11 6" stroke="#42a5e0" strokeWidth="1.400" /><path d="M4 11L9 3" stroke="#e5bf62" strokeWidth="2" /></Ic>],
  ["Add bar", <Ic><path d="M3 5V12H13V4" stroke="#42a5e0" strokeWidth="1.500" /><path d="M9 3V7M7 5H11" stroke="#111" /></Ic>],
  ["Bar shape", <Ic><path d="M3 4V12H13V4" stroke="#42a5e0" strokeWidth="1.500" /><path d="M4 8H12" stroke="#c34" strokeDasharray="1 2" /></Ic>],
  ["Paint", <Ic><path d="M4 13L10 5L12 7L7 13Z" fill="#c33" /><path d="M10 6L14 2" stroke="#efc96a" strokeWidth="2.500" /><path d="M2.500 9V14" stroke="#111" /></Ic>],
  ["Grid of bars", <Ic>{[4, 10].map((x) => [4, 10].map((y) => <rect key={x + "-" + y} x={x} y={y} width="3" height="2" fill="#3c9be0" />))}</Ic>],
  ["Approve", <Ic><rect x="2.500" y="4.500" width="11" height="9" fill="#fff" stroke="#ccc" /><path d="M5 8L8 11L14 4" stroke="#ee7b30" strokeWidth="2" /></Ic>],
];

/* ---------- ribbon parts ---------- */
const Panel = ({ w, pad, title, arrow = true, launch, children }) => (
  <PanelBox $w={w}>
    <PanelBody $pad={pad}>{children}</PanelBody>
    <PanelTitle>
      <TitleLabel>{title}{arrow && <Caret />}</TitleLabel>
      {launch && <Launch />}
    </PanelTitle>
  </PanelBox>
);
const BigButton = ({ w, icon, lines, caret }) => (
  <Big $w={w}>
    <BigArt>{icon}</BigArt>
    {lines.map((l) => <span key={l}>{l}</span>)}
    {caret && <BigCaret><Tiny /></BigCaret>}
  </Big>
);
const SmallButton = ({ icon, label, name, caret, on }) => (
  <Small $fill={caret} $on={on} aria-label={label ? undefined : name}>
    <IconSlot>{icon}</IconSlot>
    {label}
    {caret && <SmallCaret><Tiny /></SmallCaret>}
  </Small>
);

/* ---------- drawing parts ---------- */
const DIM = "#94751f";
const Tick = ({ x, y, flip }) => (
  <g>
    <path d={`M${x - 5} ${y}H${x + 5}M${x} ${y - 5}V${y + 5}`} stroke="#8c2c18" />
    <path d={flip ? `M${x - 3} ${y - 3}L${x + 3} ${y + 3}` : `M${x - 3} ${y + 3}L${x + 3} ${y - 3}`} stroke="#ff7b45" strokeWidth="1.500" />
  </g>
);
const DimText = styled.text`
  font-size: 17px;
  font-weight: 200;
  fill: #c3d04e;
  stroke: #c3d04e;
  stroke-width: 0.3;
`;
const HDim = ({ y, xs, x, label, tx }) => (
  <g>
    <path d={`M${xs[0]} ${y}H${x || xs[xs.length - 1]}`} stroke={DIM} />
    {xs.map((v) => <Tick key={v} x={v} y={y} />)}
    {label && <DimText x={tx} y={y - 2}>{label}</DimText>}
  </g>
);
const VDim = ({ x, ys, label, ty }) => (
  <g>
    <path d={`M${x} ${ys[0]}V${ys[ys.length - 1]}`} stroke={DIM} />
    {ys.map((v) => <Tick key={v} x={x} y={v} flip />)}
    {label && <DimText transform={`translate(${x - 2} ${ty}) rotate(-90)`}>{label}</DimText>}
  </g>
);
const MarkText = styled.text`
  font-size: 13px;
  fill: #2fe6e6;
  stroke: #2fe6e6;
  stroke-width: 0.4;
`;
const AxisLetter = styled.text`
  font: bold 22px "Liberation Sans", sans-serif;
  fill: #fff;
  stroke: #fff;
  stroke-width: 0.6;
`;
const AxisCode = styled.text`
  font: 16px "Liberation Sans", sans-serif;
  fill: #ffff1e;
  stroke: #ffff1e;
  stroke-width: 0.4;
`;
const CubeLetter = styled.text`
  font: bold 16px "Liberation Sans", sans-serif;
  fill: #a7abaf;
`;
const Bubble = ({ x, y, name }) => (
  <g textAnchor="middle">
    <circle cx={x} cy={y} r="28" stroke="#7d70cf" />
    <AxisLetter x={x - 2} y={y}>{name}</AxisLetter>
    <path d={`M${x - 23} ${y + 0.5}H${x + 23}`} stroke="#8f86d8" />
    <AxisCode x={x - 2} y={y + 16}>B01</AxisCode>
  </g>
);
const AXIS = "#868b90";

const Plan = () => (
  <Sheet fill="none" role="img" aria-label="Foundation plan">
    <g transform="translate(0 -158)">
      <g stroke={AXIS} strokeDasharray="31 6 5 5">
        <path d="M618 290.500H3000" strokeDashoffset="15" />
        <path d="M618 573.500H3000" strokeDashoffset="16" />
        <path d="M614 629.500H3000" strokeDashoffset="7" />
        <path d="M766.500 158V2000" strokeDashoffset="29" />
        <path d="M981.500 158V2000" strokeDashoffset="31" />
        <path d="M1227.500 158V2000" strokeDashoffset="29" />
      </g>
      <path d="M405 419.500H561" stroke="#a0a4a8" strokeDasharray="1 4" />
      <path d="M618 419.500H3000" stroke="#b0b4b8" strokeDasharray="18 3 2 3 2 3 2 3 8 3" />

      <g stroke="#e9ebee">
        <rect x="728.500" y="381.500" width="79" height="83" />
        <rect x="722.500" y="520.500" width="92" height="97" />
        <rect x="927.500" y="365.500" width="111" height="115" />
        <rect x="913.500" y="492.500" width="139" height="148" />
        <rect x="1204.500" y="398.500" width="47" height="46" />
        <path d="M3000 480.500H1152.500V647.500H3000" />
        <path d="M3000 241.500H1179.500V345.500H3000" />
        <path d="M1227 198.500H3000" />
      </g>

      <HDim y={254.5} xs={[766.5, 981.5, 1227.5]} />
      <DimText x="850" y="253">4.648</DimText>
      <DimText x="1081" y="253">5.316</DimText>
      <HDim y={216.5} xs={[1227.5]} x={3000} />
      <HDim y={235.5} xs={[1179.5, 1227.5]} x={3000} label="1.05" tx={1184} />
      <DimText x="1236" y="233">1.10</DimText>
      <VDim x={1258.5} ys={[241.5, 290.5, 345.500]} label="1.05" ty={284} />
      <DimText transform="translate(1256 335) rotate(-90)">1.20</DimText>
      <Tick x={1227.5} y={198.5} />
      <VDim x={663.5} ys={[290.5, 629.5]} label="7.35" ty={478} />
      <VDim x={693.5} ys={[290.5, 573.5]} label="6.13" ty={448} />
      <VDim x={718.5} ys={[290.5, 419.5]} label="2.82" ty={374} />
      <VDim x={755.5} ys={[381.5, 419.5]} label="0.825" ty={425} />
      <HDim y={403.5} xs={[766.5, 807.5]} label="0.875" tx={762} />
      <HDim y={350.5} xs={[925.5, 1038.5]} label="2.450" tx={957} />
      <HDim y={397.5} xs={[981.5, 1038.5]} label="1.225" tx={985} />
      <VDim x={908.5} ys={[365.5, 481.5]} label="2.500" ty={446} />
      <VDim x={955.5} ys={[365.5, 419.5]} label="1.175" ty={416} />
      <path d="M911 365.500H927M911 481.500H927" stroke={DIM} strokeDasharray="1 5" />

      <MarkText x="776" y="440">ق ١</MarkText>
      <MarkText x="1003" y="453">ق ٧</MarkText>
      <MarkText x="781" y="591">ق٣</MarkText>
      <MarkText x="999" y="602">ق١١</MarkText>
      <MarkText x="1197" y="592">ق١٢</MarkText>
      <MarkText x="1234" y="439">{"ق×\u200F"}</MarkText>
      <MarkText x="1203" y="315">ق٤</MarkText>

      <Bubble x={589} y={290} name="A" />
      <Bubble x={589} y={420} name="B" />
      <Bubble x={589} y={573} name="C" />
      <Bubble x={585.5} y={629} name="D" />

      <path d="M373 440.500H438M405.500 407V473" stroke="#f2f2f2" />
      <rect x="402.500" y="437.500" width="5" height="5" stroke="#fff" fill="#212830" />

      <path d="M7.500 607V644M12 647.500H48" stroke="#dfe1e3" />
      <rect x="4.500" y="644.500" width="7" height="7" stroke="#fff" />
      <path d="M9 593L14 598.500L19 593M14 598V604M52 636L62 646M62 636L52 646" stroke="#c6c9cc" />
    </g>
  </Sheet>
);

const ViewCube = () => (
  <CubeWrap>
    <svg width="104" height="128" viewBox="-6 0 104 128" fill="none" role="img" aria-label="View cube">
      <circle cx="46" cy="50" r="38" stroke="#a9adb2" strokeOpacity=".3" strokeWidth="7" />
      <rect x="28" y="32" width="36" height="36" fill="#d3d4d6" fillOpacity=".7" />
      <rect x="35" y="39" width="23" height="23" fill="#c2c4c7" fillOpacity=".6" />
      <g textAnchor="middle">
        <text x="47" y="54" fontSize="9" fill="#474c52">TOP</text>
        <CubeLetter x="46" y="17">N</CubeLetter>
        <CubeLetter x="46" y="96">S</CubeLetter>
        <CubeLetter x="7" y="56">W</CubeLetter>
        <CubeLetter x="86" y="56">E</CubeLetter>
      </g>
      <rect x="27.500" y="112.500" width="38" height="14" rx="3" fill="#b7b9c0" fillOpacity=".75" stroke="#d0d2d8" strokeOpacity=".6" />
      <text x="30" y="122" fontSize="9" fill="#4b4f58">WCS</text>
      <path d="M55 117H61L58 120Z" stroke="#c9cbd0" />
    </svg>
  </CubeWrap>
);

const NavTools = () => (
  <NavBar>
    <svg width="27" height="172" viewBox="0 0 27 172" fill="none" stroke="#32363c" strokeOpacity=".6" role="img" aria-label="Navigation bar">
      <rect x="19.500" y="3.500" width="4" height="4" />
      <circle cx="14" cy="24" r="8" /><circle cx="14" cy="24" r="4" /><path d="M4 32H24" strokeOpacity=".3" />
      <path d="M8 67L5 61C6 59 8 61 9 62L8 54C10 53 11 55 11 58V53C13 51 14 53 14 57V53C16 52 17 54 17 57V55C19 54 20 56 20 59C20 65 19 66 18 68H9Z" />
      <path d="M5 75L20 90M20 75L5 90M5 78V75H8M17 75H20V78" /><circle cx="18" cy="86" r="4" />
      <ellipse cx="14" cy="113" rx="9" ry="4" /><ellipse cx="14" cy="113" rx="4" ry="9" />
      <rect x="4.500" y="137.500" width="5" height="5" /><rect x="11.500" y="137.500" width="5" height="5" /><rect x="18.500" y="137.500" width="5" height="5" />
      <rect x="4.500" y="145.500" width="12" height="10" /><path d="M9 148L13 150.500L9 153Z" />
      <path d="M12 41H16L14 43ZM12 96H16L14 98ZM12 127H16L14 129Z" fill="#32363c" />
      <circle cx="22" cy="166" r="2" />
    </svg>
  </NavBar>
);

const G = "#c4c4c4";
const BL = "#3f8cf0";
const st = {
  grid: <Ic><path d="M2 4.500H14M2 8H14M2 11.500H14M4.500 2V14M8 2V14M11.500 2V14" stroke={G} /></Ic>,
  snap: <Ic><path d="M2 3.500H14M2 6.500H14M2 9.500H14M2 12.500H14" stroke={G} strokeDasharray="1 1" /></Ic>,
  ortho: <Ic><path d="M3.500 3V12.500H14M4 8.500H8.500V12" stroke={BL} strokeWidth="1.400" /></Ic>,
  polar: <Ic><circle cx="7.500" cy="8.500" r="5" stroke={G} strokeWidth="1.300" /><path d="M7.500 8.500H14M7.500 8.500L12 4" stroke={G} /></Ic>,
  iso: <Ic><path d="M2 2L14 14M9 1V15" stroke={G} strokeOpacity=".8" /></Ic>,
  otrack: <Ic><path d="M13 3L3 13H14" stroke={BL} strokeWidth="1.600" /></Ic>,
  osnap: <Ic><rect x="4.500" y="4.500" width="9" height="9" stroke={BL} strokeWidth="1.500" /><rect x="1" y="1" width="5" height="5" rx="2" fill="#198a2c" /></Ic>,
  anno: (c, extra) => <Ic><path d="M8 2L10 6V9L14 14H10.500L8 11.500L5.500 14H2L6 9V6Z" fill={c} />{extra && <path d="M9 3L14 6M13 2L10 7" stroke={c} strokeWidth="1.400" />}</Ic>,
  gear: <Ic><path d="M8 2L9.500 4L12 3.500L12.200 6L14 8L12.200 10L12 12.500L9.500 12L8 14L6.500 12L4 12.500L3.800 10L2 8L3.800 6L4 3.500L6.500 4Z" fill={G} /><circle cx="8" cy="8" r="1.800" fill="#515151" /></Ic>,
  iso2: <Ic><rect x="2.500" y="2.500" width="5" height="5" stroke={G} /><circle cx="11.500" cy="7" r="3" stroke={G} /><path d="M7 9L9.500 13.500H4.500Z" stroke={G} /></Ic>,
  hw: <Ic><circle cx="8" cy="8" r="6.500" fill="#0a62c0" stroke="#2f8cf0" /><path d="M6 10L8 11L12 6" stroke="#3f9af5" /></Ic>,
  trust: <Ic><rect x="3" y="2" width="8" height="6" fill="#9cc9ee" /><path d="M2 8H11V13H2Z" fill="#f0d64a" /><path d="M7 10L10 13L15 8" stroke="#4cab3d" strokeWidth="2" /></Ic>,
  clean: <Ic><rect x="1.500" y="3.500" width="13" height="9" stroke={G} strokeWidth="1.300" /><path d="M5 10L7 8M4.500 8V10.500H7M11 6L9 8M11.500 8V5.500H9" stroke={G} strokeWidth="1.200" /></Ic>,
  menu: <Ic><path d="M2 3.500H14M2 8H14M2 12.500H14" stroke="#d6d6d6" strokeWidth="1.400" /></Ic>,
};

const tabs = ["Home", "Insert", "Annotate", "Parametric", "View", "Manage", "Output", "Add-ins", "A360", "Express Tools", "Featured Apps", "AutoRebar"];

export default function App() {
  return (
    <Page>
      <Global />
      <Screen>
        <Window>
          <Header>
            <TitleBar>
              <QuickAccess>
                <Cell aria-label="New"><NewI /></Cell>
                <Cell $w={19} aria-label="Open"><OpenI /></Cell>
                <Cell aria-label="Save"><SaveI /></Cell>
                <Cell $w={19} aria-label="Save as"><SaveI pen /></Cell>
                <Cell aria-label="Plot"><PrintI /></Cell>
                <Cell $w={18} aria-label="Undo"><Arrow c="#eee" /></Cell>
                <Cell $w={12} aria-label="Undo list"><Tiny /></Cell>
                <Cell $w={18} aria-label="Redo"><Arrow flip c="#8d8d8d" /></Cell>
                <Cell $w={10} aria-label="Redo list"><Tiny /></Cell>
                <Cell aria-label="Text dimension"><DimA /></Cell>
                <Cell aria-label="Signal"><PulseI /></Cell>
                <Cell $w={12} aria-label="Customize toolbar"><MoreI /></Cell>
              </QuickAccess>
              <Title><span>Autodesk AutoCAD 2018</span><span>Structure for main building.dwg</span></Title>
              <InfoCenter>
                <Cell $w={11} aria-label="Collapse search"><Ic w={5} h={8}><path d="M1 1L5 4L1 7Z" fill="#fff" /></Ic></Cell>
                <Search aria-label="Search" placeholder="Type a keyword or phrase" />
                <Cell aria-label="Find"><Binoc /></Cell>
                <Cell $w={19} aria-label="Account"><UserI /></Cell>
                <SignIn>Sign In<Tiny /></SignIn>
                <Cell $w={18} aria-label="Store"><CartI /></Cell>
                <Cell $w={18} aria-label="Stay connected"><TriI /></Cell>
                <Cell $w={9} aria-label="Connect list"><Tiny /></Cell>
                <Divider />
                <Cell $w={18} aria-label="Help"><HelpI /></Cell>
                <Cell $w={10} aria-label="Help list"><Tiny /></Cell>
              </InfoCenter>
              <WindowButtons>
                <Cell $w={37} aria-label="Minimize"><Ic w={10} h={10}><path d="M1 5.500H9" stroke="#333" /></Ic></Cell>
                <Cell $w={37} aria-label="Maximize"><Ic w={10} h={10}><rect x="1.500" y="1.500" width="7" height="7" stroke="#222" /></Ic></Cell>
                <Cell $w={37} aria-label="Close"><Ic w={10} h={10}><path d="M1 1L9 9M9 1L1 9" stroke="#222" /></Ic></Cell>
              </WindowButtons>
            </TitleBar>
            <Tabs>
              {tabs.map((t, i) => <Tab key={t} $on={i === 0}>{t}</Tab>)}
              <Tab aria-label="Ribbon display"><Ic w={30} h={8}><rect x="8" y="0" width="12" height="7" rx="2" fill="#eee" /><path d="M12 5L14 2.500L16 5Z" fill="#333" /><path d="M23 3H27L25 5.500Z" fill="#eee" /></Ic></Tab>
            </Tabs>
            <AppButton aria-label="Application menu"><LogoA /></AppButton>
          </Header>

          <Ribbon>
            <Panel w={178} title="Draw">
              <BigButton w={25} icon={<LineI />} lines={["Line"]} />
              <BigButton w={46} icon={<PolyI />} lines={["Polyline"]} />
              <BigButton w={35} icon={<CircleI />} lines={["Circle"]} caret />
              <BigButton w={38} icon={<ArcI />} lines={["Arc"]} caret />
              <Col $w={27}>
                <SmallButton name="Rectangle" icon={<RectI />} caret />
                <SmallButton name="Ellipse" icon={<EllI />} caret />
                <SmallButton name="Hatch" icon={<HatchI />} caret />
              </Col>
            </Panel>
            <Panel w={203} pad={4} title="Modify">
              <Col $w={57}>
                <SmallButton icon={<MoveI />} label="Move" />
                <SmallButton icon={<CopyI />} label="Copy" />
                <SmallButton icon={<StretchI />} label="Stretch" />
              </Col>
              <Col $w={57}>
                <SmallButton icon={<RotateI />} label="Rotate" />
                <SmallButton icon={<MirrorI />} label="Mirror" />
                <SmallButton icon={<ScaleI />} label="Scale" />
              </Col>
              <Col $w={54}>
                <SmallButton icon={<TrimI />} label="Trim" caret />
                <SmallButton icon={<FilletI />} label="Fillet" caret />
                <SmallButton icon={<ArrayI />} label="Array" caret />
              </Col>
              <Col $w={18} $ml={7}>
                <SmallButton name="Erase" icon={<BrushI />} />
                <SmallButton name="Explode" icon={<ExplodeI />} />
                <SmallButton name="Offset" icon={<OffsetI />} />
              </Col>
            </Panel>
            <Panel w={153} pad={1} title="Annotation">
              <BigButton w={36} icon={<BigA />} lines={["Text"]} caret />
              <BigButton w={48} icon={<DimI />} lines={["Dimension"]} />
              <Col $w={58} $ml={5}>
                <SmallButton icon={<LinearI />} label="Linear" caret />
                <SmallButton icon={<LeaderI />} label="Leader" caret />
                <SmallButton icon={<TableI />} label="Table" />
              </Col>
            </Panel>
            <Panel w={222} pad={4} title="Layers">
              <BigButton w={44} icon={<LayersBig />} lines={["Layer", "Properties"]} />
              <Col $w={169} $ml={3}>
                <Row>
                  <Combo $w={169} $dark>
                    <Bulb /><IconSlot><Sun /></IconSlot><Lock /><Swatch $s={10} $ml={7} />
                    <select aria-label="Layer" defaultValue="plain conrete"><option>plain conrete</option></select>
                    <Caret />
                  </Combo>
                </Row>
                <LayerRow>
                  <SmallButton name="Layer off" icon={<LayerI one c="#8dbcf2" />} />
                  <SmallButton name="Isolate" icon={<LayerMove c="#d5dde8" />} />
                  <SmallButton name="Freeze" icon={<LayerI one c="#bcd6f2" />} />
                  <SmallButton name="Lock" icon={<LayerI one c="#9cb0b8" />} />
                  <SmallButton icon={<LayerMove c="#9fc4f2" />} label="Make Current" />
                </LayerRow>
                <LayerRow>
                  <SmallButton name="Layers on" icon={<LayerI c="#e8a43a" />} />
                  <SmallButton name="Unisolate" icon={<LayerMove />} />
                  <SmallButton name="Thaw" icon={<LayerI c="#f0cf4a" />} />
                  <SmallButton name="Unlock" icon={<LayerI one c="#e8c23a" />} />
                  <SmallButton icon={<LayerI c="#d9923a" />} label="Match Layer" />
                </LayerRow>
              </Col>
            </Panel>
            <Panel w={87} pad={2} title="Block">
              <BigButton w={30} icon={<InsertI />} lines={["Insert"]} caret />
              <Col $w={52} $ml={2}>
                <SmallButton icon={<CreateI />} label="Create" />
                <SmallButton icon={<CreateI star />} label="Edit" />
                <Col $w={28}><SmallButton name="Attributes" icon={<AttrI />} caret /></Col>
              </Col>
            </Panel>
            <Panel w={181} pad={4} title="Properties" launch>
              <BigButton w={44} icon={<MatchI />} lines={["Match", "Properties"]} />
              <Col $w={16} $ml={3}>
                <Row><WheelI /></Row>
                <Row><WeightI /></Row>
                <Row><LtypeI /></Row>
              </Col>
              <Col $w={111} $ml={1}>
                <Row>
                  <Combo $pad={8}><Swatch $ml={6} /><select aria-label="Object color" defaultValue="ByLayer"><option>ByLayer</option></select><Caret /></Combo>
                </Row>
                <Row>
                  <Combo $pad={2}><LineSample /><select aria-label="Lineweight" defaultValue="ByLayer"><option>ByLayer</option></select><Caret /></Combo>
                </Row>
                <Row>
                  <Combo $pad={2}><LineSample /><select aria-label="Linetype" defaultValue="ByLayer"><option>ByLayer</option></select><Caret /></Combo>
                </Row>
              </Col>
            </Panel>
            <Panel w={56} pad={2} title="Groups">
              <BigButton w={30} icon={<GroupBig />} lines={["Group"]} />
              <Col $w={18} $ml={2}>
                <SmallButton name="Ungroup" icon={<GroupEdit />} />
                <SmallButton name="Edit group" icon={<GroupList />} />
                <SmallButton name="Group selection" icon={<GroupList cur />} on />
              </Col>
            </Panel>
            <Panel w={78} pad={8} title="Utilities">
              <BigButton w={40} icon={<MeasureI />} lines={["Measure"]} caret />
              <Col $w={18} $ml={10}>
                <SmallButton name="Quick select" icon={<QSelI />} />
                <SmallButton name="Point" icon={<IdI />} />
                <SmallButton name="Calculator" icon={<CalcI />} />
              </Col>
            </Panel>
            <Panel w={65} pad={7} title="Clipboard" arrow={false}>
              <BigButton w={30} icon={<PasteI />} lines={["Paste"]} caret />
              <Col $w={18} $ml={8}>
                <SmallButton name="Cut" icon={<CutI />} />
                <SmallButton name="Copy clip" icon={<ClipI />} />
              </Col>
            </Panel>
            <Panel w={50} pad={10} title="View" launch>
              <BigButton w={30} icon={<BaseI />} lines={["Base"]} caret />
            </Panel>
          </Ribbon>

          <FileBar>
            <FileTab $w={99}>Start</FileTab>
            <FileTab $w={154} $on>Structure for main building*<Ic w={9} h={7}><path d="M1 1L6 6M6 1L1 6" stroke="#444" strokeWidth="1.600" /></Ic></FileTab>
            <AddTab aria-label="New drawing"><Plus /></AddTab>
            <Dock>
              {dock.map(([n, i]) => <DockButton key={n} aria-label={n}>{i}</DockButton>)}
              <DockClose aria-label="Close toolbar"><Ic w={5} h={5}><path d="M0 0L5 5M5 0L0 5" stroke="#ddd" /></Ic></DockClose>
            </Dock>
          </FileBar>

          <Canvas>
            <Plan />
            <ViewLabel>−][Top][2D Wireframe]</ViewLabel>
            <MdiButtons>
              <Cell $w={16} aria-label="Minimize drawing"><Ic w={10} h={12}><path d="M1 9H9" stroke="#e8eaec" strokeWidth="2.400" /></Ic></Cell>
              <Cell $w={16} aria-label="Restore drawing"><Ic w={10} h={12}><path d="M4 4V2H9V8H7" stroke="#e8eaec" strokeWidth="1.400" /><rect x="2" y="5" width="5" height="5" stroke="#e8eaec" strokeWidth="1.400" /></Ic></Cell>
              <Cell $w={16} aria-label="Close drawing"><Ic w={10} h={12}><path d="M2 3L8 9.500M8 3L2 9.500" stroke="#f2f4f6" strokeWidth="2" /></Ic></Cell>
            </MdiButtons>
            <ViewCube />
            <NavTools />
            <History>
              <Echo $dim>Command:</Echo>
              <Echo>Command: _.erase 2 found</Echo>
            </History>
            <CommandLine>
              <CommandTools>
                <Cell $w={8} aria-label="Move command line"><Ic w={6} h={15}><path d="M1.500 1V14M3.500 1V14M5.500 1V14" stroke="#b5b5b5" strokeDasharray="1 1" /></Ic></Cell>
                <Cell $w={16} aria-label="Close command line"><Ic w={8} h={8}><path d="M1 1L7 7M7 1L1 7" stroke="#e4e4e4" strokeWidth="1.600" /></Ic></Cell>
                <Cell $w={19} aria-label="Customize"><Ic w={14} h={14}><path d="M6 6L12 12" stroke="#dedede" strokeWidth="2.600" /><path d="M2 2L5 4.500L4.500 1.500C7 1 8.500 4 7 6C5 8.500 1 6.500 2 2Z" fill="#dedede" /></Ic></Cell>
              </CommandTools>
              <CommandInput>
                <Ic w={12} h={12}><rect x=".5" y=".5" width="11" height="11" rx="1" fill="#a9afb6" stroke="#6d7883" /><path d="M2.500 3.500L5 6L2.500 8.500M6 9H10" stroke="#333c46" /></Ic>
                <Caret s={3} c="#555" />
                <input aria-label="Command" placeholder="Type a command" />
                <Ic w={8} h={5}><path d="M1 4H7L4 1Z" fill="#111" /></Ic>
              </CommandInput>
            </CommandLine>
          </Canvas>

          <Bottom>
            <LayoutTabs>
              <LayoutTab $w={48} $on>Model</LayoutTab>
              <LayoutTab $w={70}>AR-MA-101</LayoutTab>
              <AddTab $m="0 0 0 2px" $r="3px 2px 8px 5px" aria-label="New layout"><Plus /></AddTab>
            </LayoutTabs>
            <Status>
              <StatusGroup $w={41}><StatusText>MODEL</StatusText></StatusGroup>
              <StatusGroup $w={54}><Cell aria-label="Grid">{st.grid}</Cell><Cell $w={18} aria-label="Snap">{st.snap}</Cell><Cell $w={12} aria-label="Snap list"><Caret /></Cell></StatusGroup>
              <StatusGroup $w={84}><Cell aria-label="Ortho">{st.ortho}</Cell><Cell aria-label="Polar">{st.polar}</Cell><Cell $w={12} aria-label="Polar list"><Caret /></Cell><Cell $w={18} aria-label="Isodraft">{st.iso}</Cell><Cell $w={12} aria-label="Isodraft list"><Caret /></Cell></StatusGroup>
              <StatusGroup $w={53}><Cell aria-label="Object tracking">{st.otrack}</Cell><Cell $w={18} aria-label="Object snap">{st.osnap}</Cell><Cell $w={12} aria-label="Snap modes"><Caret /></Cell></StatusGroup>
              <StatusGroup $w={87}><Cell aria-label="Annotation visibility">{st.anno(BL, true)}</Cell><Cell aria-label="Auto scale">{st.anno(G, true)}</Cell><Cell $w={18} aria-label="Annotation scale">{st.anno(G)}</Cell><StatusText>1:1</StatusText><Caret /></StatusGroup>
              <StatusGroup $w={34}><Cell aria-label="Workspace">{st.gear}</Cell><Cell $w={12} aria-label="Workspace list"><Caret /></Cell></StatusGroup>
              <StatusGroup $w={22}><Cell aria-label="Monitor"><Plus s={12} /></Cell></StatusGroup>
              <StatusGroup $w={22}><Cell aria-label="Isolate objects">{st.iso2}</Cell></StatusGroup>
              <StatusGroup $w={21}><Cell aria-label="Hardware acceleration">{st.hw}</Cell></StatusGroup>
              <StatusGroup $w={21}><Cell aria-label="Trusted file">{st.trust}</Cell></StatusGroup>
              <StatusGroup $w={41}><Cell aria-label="Clean screen">{st.clean}</Cell><Cell aria-label="Customization">{st.menu}</Cell></StatusGroup>
            </Status>
          </Bottom>
        </Window>
        <Gutter />
      </Screen>
      <Taskbar>
        <TaskSlot $w={258} />
        <TaskSlot $w={137} $bg="repeating-linear-gradient(90deg, #2a2a2a 0 5px, #cfcdc9 5px 7px, #555 7px 9px)" />
        <TaskSlot $w={22} />
        <TaskSlot $w={61} $bg="#a80d10" />
        <TaskSlot $w={676} />
        <TaskSlot $w={6} $bg="#111" />
        <TaskSlot $w={26} $bg="radial-gradient(#6fb6c8 30%, #eee 40%, #222 70%)" />
        <TaskSlot $w={6} $bg="#111" />
      </Taskbar>
    </Page>
  );
}
